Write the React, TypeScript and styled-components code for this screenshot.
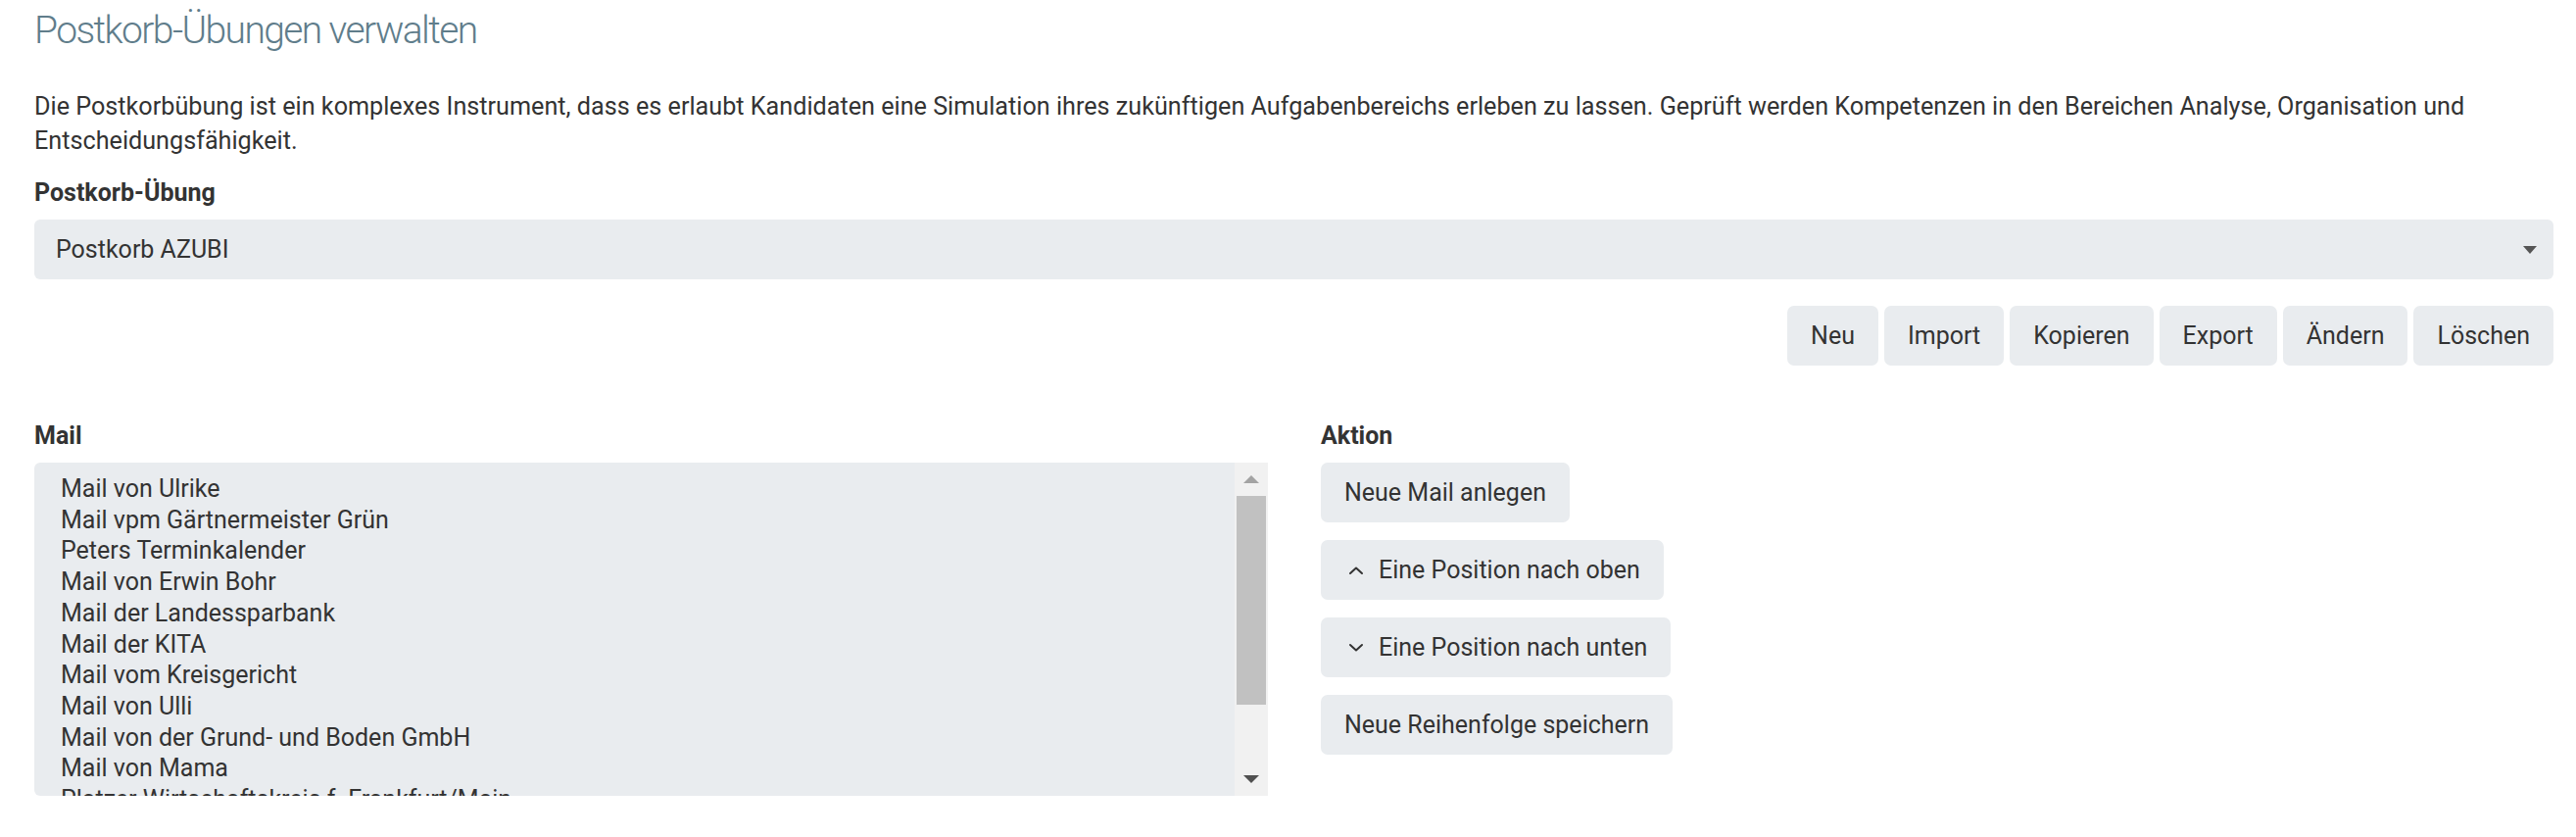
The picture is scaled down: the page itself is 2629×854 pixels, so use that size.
import React from "react";
import styled, { createGlobalStyle } from "styled-components";

const GlobalStyle = createGlobalStyle`
  html, body { margin: 0; padding: 0; background: #ffffff; }
  body {
    font-family: Roboto, "Noto Sans", "Liberation Sans", sans-serif;
    font-size: 25px;
    line-height: 35px;
    color: #333333;
  }
  * { box-sizing: border-box; }
`;

const Page = styled.main`
  padding: 7px 23px 0 35px;
`;

const Title = styled.h1`
  margin: 0;
  font-weight: 300;
  font-size: 39px;
  line-height: 48px;
  letter-spacing: -1.6px;
  color: #607d8b;
`;

const Intro = styled.p`
  margin: 36px 0 18px;
  font-size: 25.2px;
  line-height: 35px;
`;

const FieldLabel = styled.div`
  font-weight: 700;
  font-size: 25px;
  line-height: 35px;
  margin-bottom: 10px;
`;

const SelectBox = styled.div`
  height: 61px;
  background: #e9ecef;
  border-radius: 6px;
  padding: 0 17px 0 22px;
  display: flex;
  align-items: center;
  justify-content: space-between;
`;

const Toolbar = styled.div`
  margin-top: 27px;
  display: flex;
  justify-content: flex-end;
  gap: 6px;
`;

const Button = styled.button`
  height: 61px;
  padding: 0 24px;
  border: none;
  border-radius: 7px;
  background: #e9ecef;
  color: #333333;
  font-family: inherit;
  font-size: 25px;
  line-height: 35px;
  display: inline-flex;
  align-items: center;
  gap: 15px;
  cursor: pointer;
  white-space: nowrap;
`;

const Columns = styled.section`
  margin-top: 54px;
  display: grid;
  grid-template-columns: 1259px 1fr;
  column-gap: 54px;
`;

const Column = styled.div`
  display: flex;
  flex-direction: column;
`;

const ActionStack = styled.div`
  display: flex;
  flex-direction: column;
  align-items: flex-start;
  gap: 18px;
`;

const ListBox = styled.div`
  height: 340px;
  display: flex;
  background: #e9ecef;
  border-radius: 6px 0 0 6px;
  overflow: hidden;
`;

const Options = styled.ul`
  flex: 1;
  margin: 0;
  list-style: none;
  padding: 11px 0 0 27px;
  overflow: hidden;
`;

const Option = styled.li`
  font-size: 25px;
  line-height: 31.7px;
  white-space: nowrap;
`;

const ScrollBar = styled.div`
  width: 34px;
  background: #f1f1f1;
  display: flex;
  flex-direction: column;
`;

const ScrollButton = styled.div`
  height: 34px;
  flex: none;
  display: flex;
  align-items: center;
  justify-content: center;
`;

const Thumb = styled.div`
  height: 213px;
  margin: 0 2px;
  background: #c1c1c1;
`;

const Spacer = styled.div`
  flex: 1;
`;

const Triangle = ({ dir, color, w, h }: { dir: "up" | "down"; color: string; w: number; h: number }) => (
  <svg width={w} height={h} viewBox={`0 0 ${w} ${h}`}>
    <polygon
      points={dir === "up" ? `0,${h} ${w / 2},0 ${w},${h}` : `0,0 ${w},0 ${w / 2},${h}`}
      fill={color}
    />
  </svg>
);

const Chevron = ({ dir }: { dir: "up" | "down" }) => (
  <svg width="20" height="10" viewBox="0 0 20 10" fill="none">
    <polyline
      points={dir === "up" ? "6,8 12,2.5 18,8" : "6,2 12,7.5 18,2"}
      stroke="#333333"
      strokeWidth="2"
      strokeLinecap="round"
      strokeLinejoin="round"
    />
  </svg>
);

const mails = [
  "Mail von Ulrike",
  "Mail vpm Gärtnermeister Grün",
  "Peters Terminkalender",
  "Mail von Erwin Bohr",
  "Mail der Landessparbank",
  "Mail der KITA",
  "Mail vom Kreisgericht",
  "Mail von Ulli",
  "Mail von der Grund- und Boden GmbH",
  "Mail von Mama",
  "Platzer Wirtschaftskreis f. Frankfurt/Main",
  "Notiz von Frau Schmidt",
  "Mail von Peter",
];

const toolbarActions = ["Neu", "Import", "Kopieren", "Export", "Ändern", "Löschen"];

export default function App() {
  return (
    <>
      <GlobalStyle />
      <Page>
        <Title>Postkorb-Übungen verwalten</Title>
        <Intro>
          Die Postkorbübung ist ein komplexes Instrument, dass es erlaubt Kandidaten eine Simulation ihres
          zukünftigen Aufgabenbereichs erleben zu lassen. Geprüft werden Kompetenzen in den Bereichen Analyse,
          Organisation und Entscheidungsfähigkeit.
        </Intro>
        <FieldLabel>Postkorb-Übung</FieldLabel>
        <SelectBox>
          <span>Postkorb AZUBI</span>
          <Triangle dir="down" color="#555555" w={14} h={8} />
        </SelectBox>
        <Toolbar>
          {toolbarActions.map((a) => (
            <Button key={a}>{a}</Button>
          ))}
        </Toolbar>
        <Columns>
          <Column>
            <FieldLabel>Mail</FieldLabel>
            <ListBox>
              <Options>
                {mails.map((m) => (
                  <Option key={m}>{m}</Option>
                ))}
              </Options>
              <ScrollBar>
                <ScrollButton>
                  <Triangle dir="up" color="#a3a3a3" w={16} h={8} />
                </ScrollButton>
                <Thumb />
                <Spacer />
                <ScrollButton>
                  <Triangle dir="down" color="#505050" w={16} h={8} />
                </ScrollButton>
              </ScrollBar>
            </ListBox>
          </Column>
          <Column>
            <FieldLabel>Aktion</FieldLabel>
            <ActionStack>
              <Button>Neue Mail anlegen</Button>
              <Button>
                <Chevron dir="up" />
                Eine Position nach oben
              </Button>
              <Button>
                <Chevron dir="down" />
                Eine Position nach unten
              </Button>
              <Button>Neue Reihenfolge speichern</Button>
            </ActionStack>
          </Column>
        </Columns>
      </Page>
    </>
  );
}
